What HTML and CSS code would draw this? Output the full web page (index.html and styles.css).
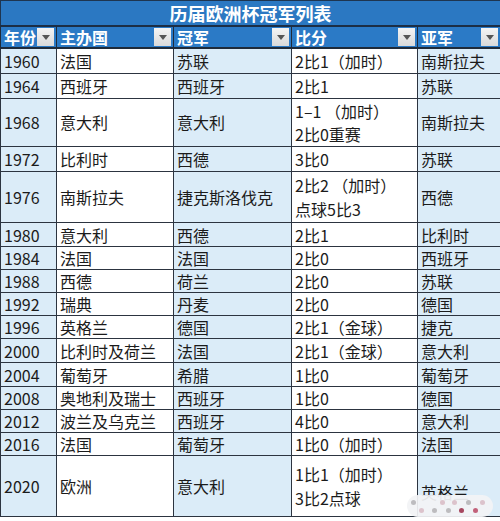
FILE: index.html
```html
<!DOCTYPE html>
<html lang="zh">
<head>
<meta charset="utf-8">
<title>历届欧洲杯冠军列表</title>
<link rel="stylesheet" href="styles.css">
</head>
<body>
<div class="wrap">
<table class="euro">
  <colgroup>
    <col class="c1"><col class="c2"><col class="c3"><col class="c4"><col class="c5">
  </colgroup>
  <thead>
    <tr class="title"><th colspan="5">历届欧洲杯冠军列表</th></tr>
    <tr class="head">
      <th><div class="hc"><span>年份</span><i class="dd"></i></div></th>
      <th><div class="hc"><span>主办国</span><i class="dd"></i></div></th>
      <th><div class="hc"><span>冠军</span><i class="dd"></i></div></th>
      <th><div class="hc"><span>比分</span><i class="dd"></i></div></th>
      <th><div class="hc"><span>亚军</span><i class="dd"></i></div></th>
    </tr>
  </thead>
  <tbody>
    <tr class="r25"><td>1960</td><td>法国</td><td>苏联</td><td>2比1（加时）</td><td>南斯拉夫</td></tr>
    <tr class="r25"><td>1964</td><td>西班牙</td><td>西班牙</td><td>2比1</td><td>苏联</td></tr>
    <tr class="r48"><td>1968</td><td>意大利</td><td>意大利</td><td>1–1 （加时）<br>2比0重赛</td><td>南斯拉夫</td></tr>
    <tr class="r25"><td>1972</td><td>比利时</td><td>西德</td><td>3比0</td><td>苏联</td></tr>
    <tr class="r51"><td>1976</td><td>南斯拉夫</td><td>捷克斯洛伐克</td><td>2比2 （加时）<br>点球5比3</td><td>西德</td></tr>
    <tr class="r24"><td>1980</td><td>意大利</td><td>西德</td><td>2比1</td><td>比利时</td></tr>
    <tr class="r23"><td>1984</td><td>法国</td><td>法国</td><td>2比0</td><td>西班牙</td></tr>
    <tr class="r23"><td>1988</td><td>西德</td><td>荷兰</td><td>2比0</td><td>苏联</td></tr>
    <tr class="r23"><td>1992</td><td>瑞典</td><td>丹麦</td><td>2比0</td><td>德国</td></tr>
    <tr class="r23"><td>1996</td><td>英格兰</td><td>德国</td><td>2比1（金球）</td><td>捷克</td></tr>
    <tr class="r24"><td>2000</td><td>比利时及荷兰</td><td>法国</td><td>2比1（金球）</td><td>意大利</td></tr>
    <tr class="r24"><td>2004</td><td>葡萄牙</td><td>希腊</td><td>1比0</td><td>葡萄牙</td></tr>
    <tr class="r23"><td>2008</td><td>奥地利及瑞士</td><td>西班牙</td><td>1比0</td><td>德国</td></tr>
    <tr class="r23"><td>2012</td><td>波兰及乌克兰</td><td>西班牙</td><td>4比0</td><td>意大利</td></tr>
    <tr class="r23"><td>2016</td><td>法国</td><td>葡萄牙</td><td>1比0（加时）</td><td>法国</td></tr>
    <tr class="r61"><td>2020</td><td>欧洲</td><td>意大利</td><td>1比1（加时）<br>3比2点球</td><td class="low">英格兰</td></tr>
  </tbody>
</table>
<div class="wm">
  <span class="dot g d1"></span>
  <span class="dot p d2"></span>
  <span class="dot p d3"></span>
  <span class="dot g d4"></span>
  <span class="dot p d5"></span>
  <span class="dot p d6"></span>
  <span class="dot g d7"></span>
  <span class="dot g d8"></span>
  <span class="dot r d9"></span>
  <span class="dot r2 d10"></span>
</div>
</div>
</body>
</html>
```

FILE: styles.css
```css
html, body {
  margin: 0;
  padding: 0;
  background: #ffffff;
}

.wrap {
  position: relative;
  width: 500px;
}

.euro {
  width: 500px;
  table-layout: fixed;
  border-collapse: collapse;
  font-family: "Noto Sans CJK SC", "Noto Sans", sans-serif;
  font-size: 16px;
  color: #1b1b1b;
}

.c1 { width: 56px; }
.c2 { width: 117px; }
.c3 { width: 118px; }
.c4 { width: 126px; }
.c5 { width: 83px; }

.title th {
  height: 24px;
  padding: 0;
  background: #2b78c2;
  color: #ffffff;
  font-size: 18px;
  font-weight: bold;
  line-height: 22px;
  text-align: center;
  border: 1px solid #1e3550;
  border-bottom: 2px solid #1c2e45;
}

.head th {
  height: 20px;
  padding: 0 2px 0 3px;
  background: #2b7ac6;
  color: #ffffff;
  font-weight: bold;
  text-align: left;
  border: 1px solid #1f2b3a;
  border-bottom: 2px solid #1f2b3a;
}

.hc {
  display: flex;
  align-items: center;
  justify-content: space-between;
  height: 20px;
  line-height: 20px;
}

.dd {
  display: flex;
  align-items: center;
  justify-content: center;
  width: 17px;
  height: 18px;
  flex: none;
  background: linear-gradient(#f4f4f4, #dadada);
}

.dd::after {
  content: "";
  border-left: 4px solid transparent;
  border-right: 4px solid transparent;
  border-top: 5px solid #555;
}

.euro td {
  padding: 0 3px;
  line-height: 20px;
  vertical-align: middle;
  border: 1px solid #2c3440;
  white-space: nowrap;
  overflow: hidden;
}

.euro td:nth-child(1),
.euro td:nth-child(3),
.euro td:nth-child(5) {
  background: #dbecf8;
}

.euro td:nth-child(2),
.euro td:nth-child(4) {
  background: #ffffff;
}

.r23 td { height: 22px; }
.r24 td { height: 23px; }
.r25 td { height: 24px; }
.r48 td { height: 47px; line-height: 23px; }
.r51 td { height: 50px; line-height: 24px; }
.r61 td { height: 60px; line-height: 24px; }
.r61 td.low { padding-top: 12px; height: 48px; }

.wm {
  position: absolute;
  left: 407px;
  top: 495px;
  width: 86px;
  height: 22px;
  border-radius: 11px;
  background: rgba(242, 243, 245, 0.93);
}

.dot {
  position: absolute;
  width: 5px;
  height: 5px;
  border-radius: 50%;
}
.dot.g { background: #bdbcbf; }
.dot.p { background: #dcc3cc; }
.dot.r { background: #a6475f; }
.dot.r2 { background: #c2617a; }

.d1 { left: 4px; top: 5px; }
.d2 { left: 33px; top: 5px; }
.d3 { left: 45px; top: 5px; }
.d4 { left: 59px; top: 5px; }
.d5 { left: 73px; top: 5px; }
.d6 { left: 12px; top: 13px; }
.d7 { left: 25px; top: 13px; }
.d8 { left: 39px; top: 13px; }
.d9 { left: 52px; top: 13px; }
.d10 { left: 66px; top: 13px; }
```
